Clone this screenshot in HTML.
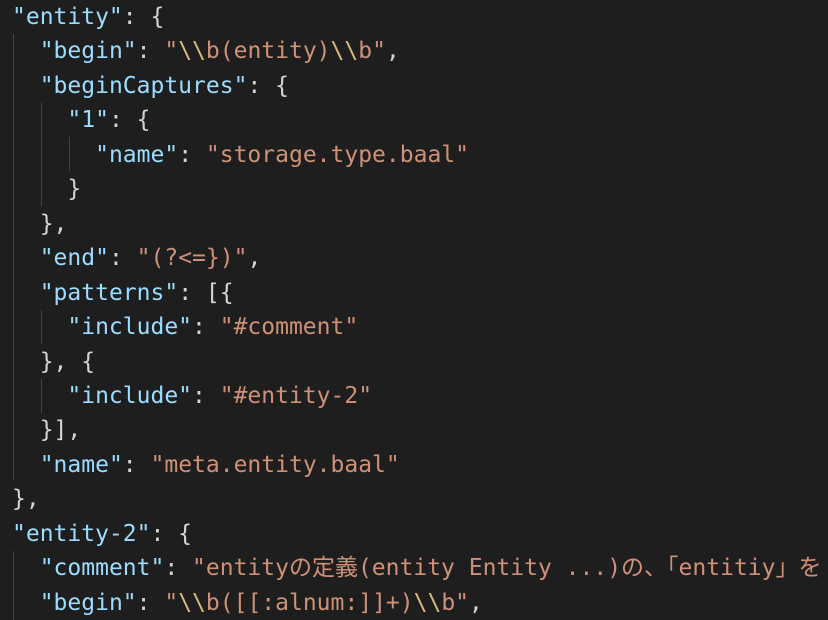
<!DOCTYPE html>
<html><head><meta charset="utf-8"><style>
html,body{margin:0;padding:0;background:#1e1e1e;width:828px;height:620px;overflow:hidden}
pre{margin:0;padding:0 0 0 12px;font-family:"DejaVu Sans Mono","Liberation Mono","Noto Sans CJK JP",monospace;font-size:23px;line-height:34.45px;color:#d4d4d4;white-space:pre;position:relative}
.k{color:#9cdcfe}.s{color:#ce9178}.e{color:#d7ba7d}
.g{position:absolute;width:1px;background:#444}
</style></head><body>
<div class="g" style="left:13px;top:34px;height:446px"></div>
<div class="g" style="left:41px;top:103px;height:103px"></div>
<div class="g" style="left:69px;top:137px;height:34px"></div>
<div class="g" style="left:41px;top:310px;height:34px"></div>
<div class="g" style="left:41px;top:379px;height:34px"></div>
<div class="g" style="left:13px;top:551px;height:69px"></div>
<pre><span class="k">"entity"</span>: {
  <span class="k">"begin"</span>: <span class="s">"<span class="e">\\</span>b(entity)<span class="e">\\</span>b"</span>,
  <span class="k">"beginCaptures"</span>: {
    <span class="k">"1"</span>: {
      <span class="k">"name"</span>: <span class="s">"storage.type.baal"</span>
    }
  },
  <span class="k">"end"</span>: <span class="s">"(?&lt;=})"</span>,
  <span class="k">"patterns"</span>: [{
    <span class="k">"include"</span>: <span class="s">"#comment"</span>
  }, {
    <span class="k">"include"</span>: <span class="s">"#entity-2"</span>
  }],
  <span class="k">"name"</span>: <span class="s">"meta.entity.baal"</span>
},
<span class="k">"entity-2"</span>: {
  <span class="k">"comment"</span>: <span class="s">"entityの定義(entity Entity ...)の、「entitiy」を</span>
  <span class="k">"begin"</span>: <span class="s">"<span class="e">\\</span>b([[:alnum:]]+)<span class="e">\\</span>b"</span>,
</pre>
</body></html>
